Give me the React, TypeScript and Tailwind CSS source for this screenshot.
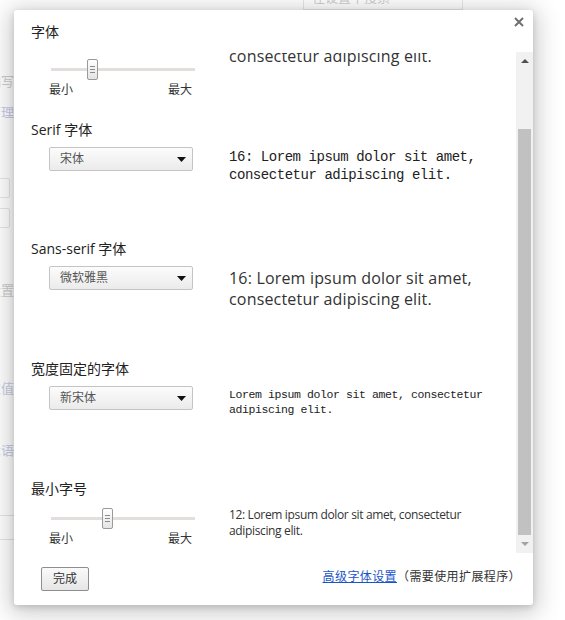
import React from "react";

const UI = "font-['Open_Sans','Noto_Sans_CJK_SC',sans-serif]";
const MONO = "font-['Liberation_Mono','Noto_Sans_CJK_SC',monospace]";

function Slider({ pos }: { pos: number }) {
  return (
    <div className="ml-[35px] w-[146px]">
      <div className="relative h-[21px]">
        <div className="absolute left-[2px] right-0 top-[9px] h-[3px] bg-[#e2dedb]" />
        <div
          className="absolute top-0 flex h-[21px] w-[11px] flex-col items-center justify-center gap-[2px] rounded-[2px] border border-[#9a9a9a] bg-gradient-to-b from-white to-[#e4e4e4]"
          style={{ left: pos }}
        >
          <span className="block h-px w-[5px] bg-[#8a8a8a]" />
          <span className="block h-px w-[5px] bg-[#8a8a8a]" />
          <span className="block h-px w-[5px] bg-[#8a8a8a]" />
        </div>
      </div>
      <div className="mt-[2px] flex justify-between pr-[3px] text-[12px] leading-[16px] text-[#333]">
        <span>最小</span>
        <span>最大</span>
      </div>
    </div>
  );
}

function Select({ value }: { value: string }) {
  return (
    <div className="ml-[35px] flex h-[24px] w-[144px] shrink-0 items-center justify-between rounded-[2px] border border-[#c4c4c4] bg-gradient-to-b from-[#fcfcfc] to-[#ebebeb] pl-[10px] pr-[6px]">
      <span className="text-[12px] text-[#555]">{value}</span>
      <svg width="9" height="5" viewBox="0 0 9 5">
        <path d="M0 0 H9 L4.5 5 Z" fill="#111" />
      </svg>
    </div>
  );
}

function Label({ children }: { children: React.ReactNode }) {
  return <div className="ml-[17px] text-[14px] leading-[20px] text-[#222]">{children}</div>;
}

export default function App() {
  return (
    <div className={`relative h-[620px] w-[565px] overflow-hidden bg-white ${UI}`}>
      {/* faded page behind the overlay */}
      <div className="flex flex-col">
        <div className="-mt-[18px] ml-[303px] h-[28px] w-[160px] border border-[#e6e6e6] pl-[8px] text-[13px] leading-[28px] text-[#cfcfcf]">
          在设置中搜索
        </div>
        <div className="flex w-[14px] flex-col">
          <div className="mt-[62px] flex justify-end whitespace-nowrap text-[13px] leading-[18px] text-[#cdcdcd]">编写</div>
          <div className="mt-[13px] flex justify-end whitespace-nowrap text-[13px] leading-[18px] text-[#c6cde6]">管理</div>
          <div className="mt-[57px] flex h-[20px] w-[24px] -ml-[14px] items-center justify-end rounded-[2px] border border-[#e6e6e6] pr-[14px]">
            <svg width="7" height="4" viewBox="0 0 7 4"><path d="M0 0 H7 L3.5 4 Z" fill="#c8c8c8" /></svg>
          </div>
          <div className="mt-[10px] flex h-[20px] w-[24px] -ml-[14px] items-center justify-end rounded-[2px] border border-[#e6e6e6] pr-[14px]">
            <svg width="7" height="4" viewBox="0 0 7 4"><path d="M0 0 H7 L3.5 4 Z" fill="#c8c8c8" /></svg>
          </div>
          <div className="mt-[53px] flex justify-end whitespace-nowrap text-[13px] leading-[18px] text-[#cdcdcd]">设置</div>
          <div className="mt-[80px] flex justify-end whitespace-nowrap text-[13px] leading-[18px] text-[#c6cde6]">取值</div>
          <div className="mt-[44px] flex justify-end whitespace-nowrap text-[13px] leading-[18px] text-[#c6cde6]">术语</div>
          <div className="mt-[56px] flex h-[25px] w-[40px] items-center justify-end border-y border-[#e4e4e4]">
            <span className="-mr-[26px] text-[12px] text-[#cdcdcd]">ery</span>
          </div>
        </div>
      </div>

      {/* dialog */}
      <div className="absolute left-[14px] top-[10px] flex h-[595px] w-[519px] flex-col rounded-[3px] bg-white shadow-[0_4px_23px_5px_rgba(0,0,0,0.2),0_2px_6px_rgba(0,0,0,0.15)]">
        <button className="absolute right-[9px] top-[7px] text-[15px] font-bold leading-[15px] text-[#6e6e6e]">
          <svg width="10" height="10" viewBox="0 0 10 10">
            <path d="M1 1 L9 9 M9 1 L1 9" stroke="#707070" strokeWidth="2" />
          </svg>
        </button>

        <div className="flex h-[543px]">
          <div className="flex w-[502px] flex-col pt-[12px]">
            {/* 字体 (scrolled) */}
            <div className="h-[98px]">
              <Label>字体</Label>
              <div className="mt-[17px] flex items-start">
                <Slider pos={38} />
                <div className="-mt-[6px] ml-[34px] h-[24px] overflow-hidden">
                  <div className="-mt-[7px] text-[16px] leading-[21px] tracking-[0.18px] text-[#333]">consectetur adipiscing elit.</div>
                </div>
              </div>
            </div>

            {/* Serif */}
            <div className="h-[119px]">
              <Label>Serif 字体</Label>
              <div className="mt-[7px] flex items-start">
                <Select value="宋体" />
                <div className={`ml-[36px] mt-[1px] text-[14px] leading-[18px] tracking-[-0.45px] text-[#222] ${MONO}`}>
                  16: Lorem ipsum dolor sit amet,
                  <br />
                  consectetur adipiscing elit.
                </div>
              </div>
            </div>

            {/* Sans-serif */}
            <div className="h-[120px]">
              <Label>Sans-serif 字体</Label>
              <div className="mt-[7px] flex items-start">
                <Select value="微软雅黑" />
                <div className="ml-[36px] mt-[2px] text-[16px] leading-[21px] tracking-[0.18px] text-[#333]">
                  16: Lorem ipsum dolor sit amet,
                  <br />
                  consectetur adipiscing elit.
                </div>
              </div>
            </div>

            {/* Fixed width */}
            <div className="h-[120px]">
              <Label>宽度固定的字体</Label>
              <div className="mt-[7px] flex items-start">
                <Select value="新宋体" />
                <div className={`ml-[36px] mt-[1px] text-[11.5px] leading-[15px] tracking-[-0.4px] text-[#222] ${MONO}`}>
                  Lorem ipsum dolor sit amet, consectetur
                  <br />
                  adipiscing elit.
                </div>
              </div>
            </div>

            {/* 最小字号 */}
            <div>
              <Label>最小字号</Label>
              <div className="mt-[9px] flex items-start">
                <Slider pos={53} />
                <div className="-mt-[1px] ml-[34px] text-[12px] leading-[16px] tracking-[-0.35px] text-[#333]">
                  12: Lorem ipsum dolor sit amet, consectetur
                  <br />
                  adipiscing elit.
                </div>
              </div>
            </div>
          </div>

          {/* scrollbar */}
          <div className="mt-[42px] flex h-[501px] w-[17px] flex-col items-center bg-[#f1f1f1]">
            <div className="flex h-[17px] w-full items-center justify-center">
              <svg width="8" height="4" viewBox="0 0 8 4"><path d="M0 4 H8 L4 0 Z" fill="#505050" /></svg>
            </div>
            <div className="mt-[60px] h-[406px] w-[13px] bg-[#c1c1c1]" />
            <div className="flex h-[17px] w-full items-center justify-center">
              <svg width="8" height="4" viewBox="0 0 8 4"><path d="M0 0 H8 L4 4 Z" fill="#a3a3a3" /></svg>
            </div>
          </div>
        </div>

        <div className="mt-[14px] flex items-center justify-between pl-[27px] pr-[12px]">
          <button className="h-[24px] w-[48px] rounded-[2px] border border-[#8e8e8e] bg-gradient-to-b from-[#fafafa] to-[#e6e6e6] text-[12px] text-[#333]">
            完成
          </button>
          <div className="-mt-[4px] text-[12px] tracking-[0.4px] text-[#333]">
            <a className="text-[#1a55c8] underline">高级字体设置</a>
            <span>（需要使用扩展程序）</span>
          </div>
        </div>
      </div>
    </div>
  );
}
